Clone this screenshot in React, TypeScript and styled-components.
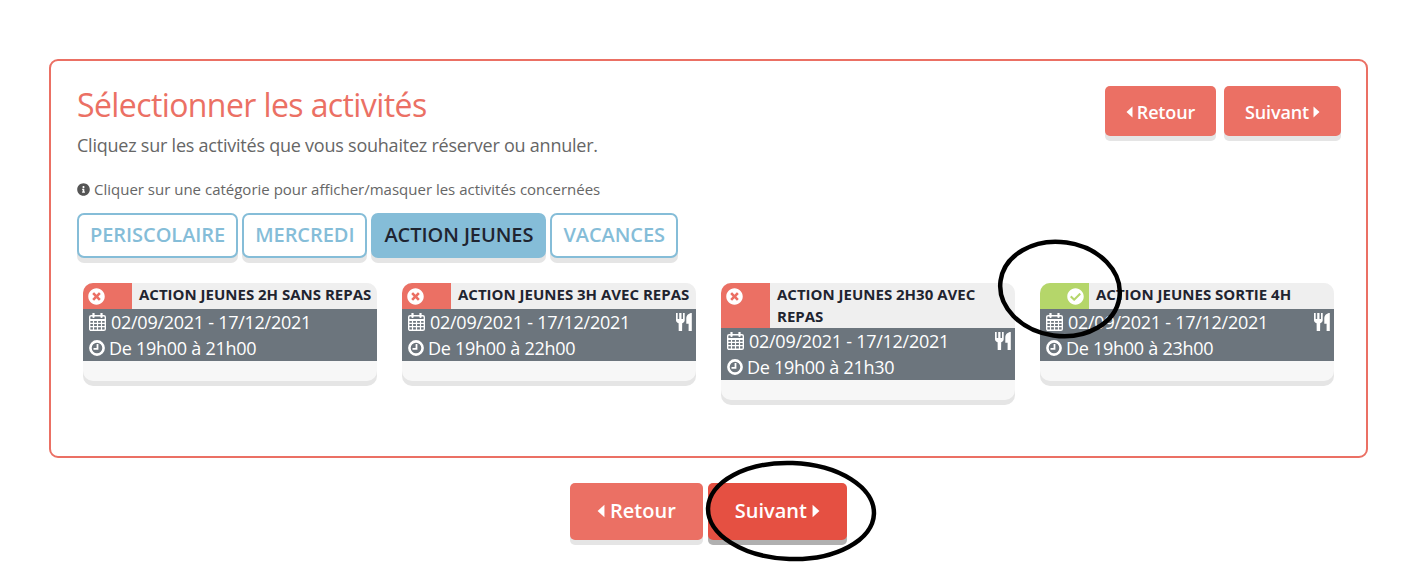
import React from "react";
import styled, { createGlobalStyle } from "styled-components";
import { FaCheckCircle, FaInfoCircle, FaTimesCircle } from "react-icons/fa";

const Global = createGlobalStyle`
  html, body { margin: 0; padding: 0; background: #fff; }
  body { font-family: "Open Sans", "Liberation Sans", sans-serif; }
  * { box-sizing: border-box; }
`;

const Page = styled.div`
  position: relative;
  width: 1415px;
  height: 569px;
  overflow: hidden;
  padding: 59px 47px 0 49px;
`;

const Panel = styled.section`
  height: 399px;
  border: 2px solid #eb7064;
  border-radius: 9px;
  padding: 25px 25px 0 26px;
`;

const HeadRow = styled.div`
  display: flex;
  justify-content: space-between;
  align-items: flex-start;
`;

const TitleBlock = styled.div`
  margin-top: -1px;
`;

const Title = styled.h1`
  margin: 0;
  font-size: 32px;
  line-height: 40px;
  font-weight: 400;
  letter-spacing: -0.6px;
  color: #eb7064;
`;

const Lead = styled.p`
  margin: 7px 0 0;
  font-size: 18px;
  line-height: 26px;
  letter-spacing: -0.23px;
  color: #666;
`;

const Hint = styled.p`
  margin: 21px 0 0;
  display: flex;
  align-items: center;
  gap: 4px;
  font-size: 15px;
  line-height: 20px;
  color: #666;
`;

const ButtonPair = styled.div`
  display: flex;
  gap: 8px;
`;

const Button = styled.button<{ $large?: boolean; $dark?: boolean }>`
  display: inline-flex;
  align-items: center;
  justify-content: center;
  gap: ${(p) => (p.$large ? "5px" : "4px")};
  border: 0;
  border-radius: 5px;
  height: ${(p) => (p.$large ? "57px" : "50px")};
  padding: ${(p) => (p.$large ? "0 27px 2px 27px" : "1px 21px 0")};
  font: 600 ${(p) => (p.$large ? "20px" : "18px")} "Open Sans", sans-serif;
  letter-spacing: ${(p) => (p.$large ? "0" : "-0.15px")};
  color: #fff;
  background: ${(p) => (p.$dark ? "#e55042" : "#eb7064")};
  box-shadow: 0 5px 0 ${(p) => (p.$dark ? "#b0b0b0" : "#e5e5e5")};
`;

const Tabs = styled.div`
  display: flex;
  gap: 4px;
  margin-top: 14px;
`;

const Tab = styled.button<{ $active?: boolean }>`
  height: 45px;
  padding: 0 11px 2px;
  border: 2px solid #85bdd8;
  border-radius: 7px;
  font: 600 20px "Open Sans", sans-serif;
  letter-spacing: -0.06px;
  color: ${(p) => (p.$active ? "#1f2430" : "#85bdd8")};
  background: ${(p) => (p.$active ? "#85bdd8" : "#fff")};
  box-shadow: 0 5px 0 #e5e5e5;
`;

const Cards = styled.div`
  display: grid;
  grid-template-columns: repeat(4, 294px);
  gap: 25px;
  align-items: start;
  margin: 25px 0 0 6px;
`;

const Card = styled.article`
  border-radius: 10px;
  overflow: hidden;
  background: #f7f7f7;
  box-shadow: 0 5px 0 #e5e5e5;
  padding-bottom: 20px;
`;

const CardHead = styled.header`
  display: flex;
  background: #efefef;
  min-height: 26px;
`;

const Status = styled.div<{ $on?: boolean }>`
  flex: 0 0 49px;
  display: flex;
  justify-content: ${(p) => (p.$on ? "flex-end" : "flex-start")};
  padding: 5px ${(p) => (p.$on ? "5px" : "0")} 0 5px;
  background: ${(p) => (p.$on ? "#b5d66a" : "#eb7064")};
  color: #fff;
  font-size: 17px;
  line-height: 1;
`;

const CardTitle = styled.h2`
  margin: 0;
  padding: 0 3px 1px 7px;
  font-size: 15px;
  line-height: 22px;
  font-weight: 700;
  color: #1f2430;
`;

const CardBody = styled.div`
  background: #6c757d;
  color: #fff;
  font-size: 18px;
  letter-spacing: -0.27px;
  height: 52px;
  padding: 0 4px 0 6px;
`;

const InfoLine = styled.div`
  display: flex;
  align-items: center;
  height: 26px;
  line-height: 26px;
`;

const CalendarSvg = styled.svg`
  flex: none;
  width: 17px;
  height: 18px;
  margin-right: 5px;
`;

const ClockSvg = styled.svg`
  flex: none;
  width: 16px;
  height: 16px;
  margin-right: 4px;
`;

const CutlerySvg = styled.svg`
  flex: none;
  margin-left: auto;
  width: 16px;
  height: 18px;
`;

const CaretSvg = styled.svg<{ $large?: boolean }>`
  flex: none;
  width: ${(p) => (p.$large ? "8px" : "7px")};
  height: ${(p) => (p.$large ? "14px" : "12px")};
`;

const BottomBar = styled.div`
  display: flex;
  justify-content: center;
  gap: 5px;
  margin-top: 25px;
`;

const Marks = styled.svg`
  position: absolute;
  inset: 0;
  width: 1415px;
  height: 569px;
  pointer-events: none;
`;

function CalendarIcon() {
  return (
    <CalendarSvg viewBox="0 0 17 18" fill="none" stroke="#fff">
      <rect x="0.7" y="2.7" width="15.6" height="14.6" rx="1.4" strokeWidth="1.4" />
      <path d="M1 7h15" strokeWidth="2" />
      <path d="M1 10.300h15M1 13.700h15M4.500 7v10M8.500 7v10M12.500 7v10" strokeWidth="1.200" />
      <path d="M4.500 0.500v3.500M12.500 0.500v3.500" strokeWidth="2.200" strokeLinecap="round" />
    </CalendarSvg>
  );
}

function ClockIcon() {
  return (
    <ClockSvg viewBox="0 0 16 16" fill="none" stroke="#fff">
      <circle cx="8" cy="8" r="6.600" strokeWidth="2.600" />
      <path d="M8.500 4v4.800H4.500" strokeWidth="1.800" />
    </ClockSvg>
  );
}

function CutleryIcon() {
  return (
    <CutlerySvg viewBox="0 0 16 18" fill="#fff">
      <path d="M0 0h1.700v6h1.500V0h2.300v6H7V0h1.700v7.300c0 1.400-1 2.400-2.500 2.900L6.100 18H2.700l-.1-7.800C1 9.700 0 8.700 0 7.300z" />
      <path d="M15.800 0v18h-3.200v-7.200H10.300V5.200C10.300 2.500 12.800 0 15.800 0z" />
    </CutlerySvg>
  );
}

function Caret({ left, large }: { left?: boolean; large?: boolean }) {
  return (
    <CaretSvg $large={large} viewBox="0 0 7 12" fill="#fff">
      <path d={left ? "M6.500 0.500v11L0.500 6z" : "M0.500 0.500v11L6.500 6z"} />
    </CaretSvg>
  );
}

function NavButtons({ large }: { large?: boolean }) {
  return (
    <>
      <Button $large={large}><Caret left large={large} />Retour</Button>
      <Button $large={large} $dark={large}>Suivant<Caret large={large} /></Button>
    </>
  );
}

type Item = { title: string; hours: string; on?: boolean; meal?: boolean };

const items: Item[] = [
  { title: "ACTION JEUNES 2H SANS REPAS", hours: "De 19h00 à 21h00" },
  { title: "ACTION JEUNES 3H AVEC REPAS", hours: "De 19h00 à 22h00", meal: true },
  { title: "ACTION JEUNES 2H30 AVEC REPAS", hours: "De 19h00 à 21h30", meal: true },
  { title: "ACTION JEUNES SORTIE 4H", hours: "De 19h00 à 23h00", meal: true, on: true },
];

const tabs = ["PERISCOLAIRE", "MERCREDI", "ACTION JEUNES", "VACANCES"];

export default function App() {
  return (
    <Page>
      <Global />
      <Panel>
        <HeadRow>
          <TitleBlock>
            <Title>Sélectionner les activités</Title>
            <Lead>Cliquez sur les activités que vous souhaitez réserver ou annuler.</Lead>
          </TitleBlock>
          <ButtonPair><NavButtons /></ButtonPair>
        </HeadRow>
        <Hint><FaInfoCircle size={13} color="#555" />Cliquer sur une catégorie pour afficher/masquer les activités concernées</Hint>
        <Tabs>
          {tabs.map((t) => (
            <Tab key={t} $active={t === "ACTION JEUNES"}>{t}</Tab>
          ))}
        </Tabs>
        <Cards>
          {items.map((c) => (
            <Card key={c.title}>
              <CardHead>
                <Status $on={c.on}>{c.on ? <FaCheckCircle /> : <FaTimesCircle />}</Status>
                <CardTitle>{c.title}</CardTitle>
              </CardHead>
              <CardBody>
                <InfoLine>
                  <CalendarIcon />
                  <span>02/09/2021 - 17/12/2021</span>
                  {c.meal && <CutleryIcon />}
                </InfoLine>
                <InfoLine>
                  <ClockIcon />
                  <span>{c.hours}</span>
                </InfoLine>
              </CardBody>
            </Card>
          ))}
        </Cards>
      </Panel>
      <BottomBar><NavButtons large /></BottomBar>
      <Marks viewBox="0 0 1415 569" fill="none" stroke="#000" strokeWidth="4.500">
        <ellipse cx="1060" cy="289" rx="60" ry="47" transform="rotate(8 1060 289)" />
        <ellipse cx="791" cy="511" rx="83" ry="48" transform="rotate(2 791 511)" />
      </Marks>
    </Page>
  );
}
